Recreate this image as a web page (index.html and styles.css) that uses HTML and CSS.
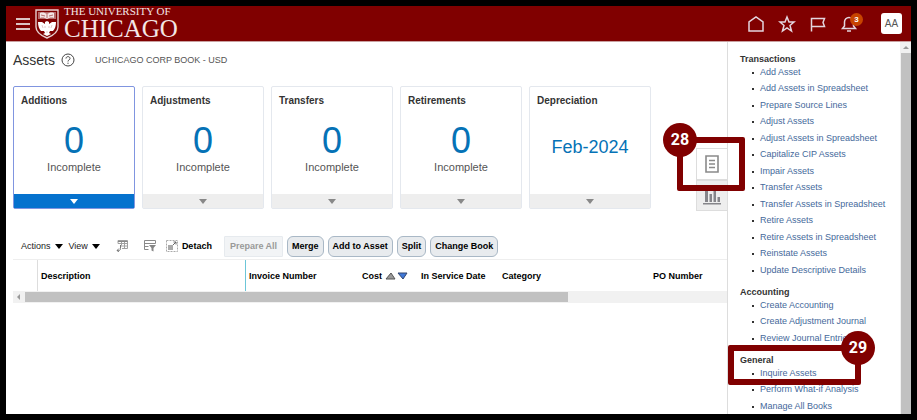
FILE: index.html
```html
<!DOCTYPE html>
<html lang="en">
<head>
    <meta charset="UTF-8">
    <meta name="viewport" content="width=device-width, initial-scale=1.0">
    <title>Assets</title>
    <link rel="stylesheet" href="styles.css">
</head>
<body>
    <header class="topbar">
        <button class="icon-button menu" type="button" aria-label="Menu">
            <svg width="14" height="12" viewBox="0 0 14 12" stroke="#dcc3c3" stroke-width="2"><path d="M0 1h14M0 6h14M0 11h14"/></svg>
        </button>
        <a class="logo" href="#">
            <svg width="24" height="30" viewBox="0 0 24 30">
                <path d="M1 1h22v17c0 6-6 9-11 11C7 27 1 24 1 18z" fill="#800000" stroke="#e6cfcf" stroke-width="1.4"/>
                <path d="M3 3h18v7H3z" fill="#b56a6a"/>
                <path d="M5 4c3-1 5 0 7 1 2-1 4-2 7-1v5c-3-1-5 0-7 1-2-1-4-2-7-1z" fill="#f4e6e6"/>
                <path d="M12 5v4M6 6l4 1M18 6l-4 1" stroke="#a65050" stroke-width=".8"/>
                <path d="M3 13l4 0 3 2 0-2 2-1 2 1 0 2 3-2 4 0c0 4-1 7-3 9l-3 0-1 2 2 1-4 2-4-2 2-1-1-2-3 0c-2-2-3-5-3-9z" fill="#fff"/>
                <path d="M7 16l1 3M10 17v2M14 17v2M17 16l-1 3M12 22v2" stroke="#d3a5a5" stroke-width=".6"/>
            </svg>
            <span class="logo-text">
                <span class="logo-small">THE UNIVERSITY OF</span>
                <span class="logo-big">CHICAGO</span>
            </span>
        </a>
        <nav class="top-icons">
            <button class="icon-button" type="button" aria-label="Home">
                <svg width="18" height="18" viewBox="0 0 18 18" fill="none" stroke="#e3d5de" stroke-width="1.5"><path d="M2 16V7l7-5 7 5v9z"/></svg>
            </button>
            <button class="icon-button" type="button" aria-label="Favorites">
                <svg width="18" height="18" viewBox="0 0 18 18" fill="none" stroke="#e3d5de" stroke-width="1.5"><path d="M9 2l2 5h5l-4 3.500 1.500 5.500L9 12.800 4.500 16 6 10.500 2 7h5z"/></svg>
            </button>
            <button class="icon-button" type="button" aria-label="Watchlist">
                <svg width="18" height="18" viewBox="0 0 18 18" fill="none" stroke="#e3d5de" stroke-width="1.5"><path d="M2.500 16.500V3.500h13L14 7.500l1.500 4h-13"/></svg>
            </button>
            <button class="icon-button bell" type="button" aria-label="Notifications">
                <svg width="18" height="18" viewBox="0 0 18 18" fill="none" stroke="#e3d5de" stroke-width="1.5"><path d="M2.500 13.500h13L13.500 11V7a4.500 4.500 0 0 0-9 0v4z"/><path d="M7 16h4"/></svg>
                <span class="badge">3</span>
            </button>
            <button class="avatar" type="button">AA</button>
        </nav>
    </header>

    <div class="page">
        <main class="content">
            <div class="title-row">
                <h1>Assets</h1>
                <button class="icon-button" type="button" aria-label="Help">
                    <svg width="14" height="14" viewBox="0 0 14 14" fill="none" stroke="#444"><circle cx="7" cy="7" r="6"/><path d="M5 5.500c0-2.500 4-2.500 4 0C9 7 7 6.800 7 8.500M7 9.700v1.200"/></svg>
                </button>
                <span class="book">UCHICAGO CORP BOOK - USD</span>
            </div>

            <div class="overview">
                <section class="card selected">
                    <h2>Additions</h2>
                    <div class="card-body"><a class="count" href="#">0</a><span>Incomplete</span></div>
                    <button class="card-foot" type="button" aria-label="Show additions"></button>
                </section>
                <section class="card">
                    <h2>Adjustments</h2>
                    <div class="card-body"><a class="count" href="#">0</a><span>Incomplete</span></div>
                    <button class="card-foot" type="button" aria-label="Show adjustments"></button>
                </section>
                <section class="card">
                    <h2>Transfers</h2>
                    <div class="card-body"><a class="count" href="#">0</a><span>Incomplete</span></div>
                    <button class="card-foot" type="button" aria-label="Show transfers"></button>
                </section>
                <section class="card">
                    <h2>Retirements</h2>
                    <div class="card-body"><a class="count" href="#">0</a><span>Incomplete</span></div>
                    <button class="card-foot" type="button" aria-label="Show retirements"></button>
                </section>
                <section class="card">
                    <h2>Depreciation</h2>
                    <div class="card-body"><a class="period" href="#">Feb-2024</a></div>
                    <button class="card-foot" type="button" aria-label="Show depreciation"></button>
                </section>

                <div class="side-tabs">
                    <button class="side-tab active" type="button" aria-label="Tasks">
                        <svg width="14" height="18" viewBox="0 0 14 18" fill="none" stroke="#8a8a8a" stroke-width="1.600"><path d="M1 1h12v16H1z"/><path d="M4 5.500h6M4 9h6M4 12.500h6"/></svg>
                    </button>
                    <button class="side-tab" type="button" aria-label="Reports">
                        <svg width="18" height="18" viewBox="0 0 18 18" fill="#85858a"><path d="M0 16h18v1.500H0zM2 2h3v13H2zM6.500 7h2.500v8H6.500zM10.500 4H13v11h-2.500zM14.500 10H17v5h-2.500z"/></svg>
                    </button>
                    <div class="callout callout-tasks"><span>28</span></div>
                </div>
            </div>

            <div class="toolbar">
                <button class="menu-button" type="button">Actions</button>
                <button class="menu-button" type="button">View</button>
                <button class="icon-button export" type="button" aria-label="Export">
                    <svg width="12" height="12" viewBox="0 0 12 12" fill="none" stroke="#a0a0a0"><path d="M2 .500h9.500v8H6M2 3.500h9.500M5 6h6.500M5.500.500v5M8.500.500v8M2 .500v3"/><path d="M2 1.500h9.500" stroke="#888"/><path d="M4.500 5v3.500c0 2-1 2-3.500 2M3 8.500l-2 2 2 1.500" stroke="#777"/></svg>
                </button>
                <button class="icon-button query" type="button" aria-label="Query by example">
                    <svg width="12" height="12" viewBox="0 0 12 12" fill="none" stroke="#8a8a8a"><path d="M11.500 3.500V.500H.500v9h4M.500 3.500h11M.500 6.500h4"/><path d="M5 5h7L9.500 8v3.500l-2-1V8z" fill="#858585" stroke="none"/></svg>
                </button>
                <button class="detach" type="button">
                    <svg width="12" height="12" viewBox="0 0 12 12" fill="none" stroke="#aaa"><path d="M.500.500h11v11H.500z" stroke-dasharray="2 1"/><path d="M2 5h5v5H2z" fill="#aaa" stroke="none"/><path d="M7 5l3-3M7.500 2H10v2.500" stroke="#666"/></svg>
                    Detach
                </button>
                <div class="actions">
                    <button class="action" type="button" disabled>Prepare All</button>
                    <button class="action" type="button">Merge</button>
                    <button class="action" type="button">Add to Asset</button>
                    <button class="action" type="button">Split</button>
                    <button class="action" type="button">Change Book</button>
                </div>
            </div>

            <table class="grid">
                <thead>
                    <tr>
                        <th class="col-select"></th>
                        <th class="col-description">Description</th>
                        <th class="col-invoice">Invoice Number</th>
                        <th class="col-cost">Cost
                            <svg width="23" height="8" viewBox="0 0 23 8"><path d="M1 7l5-6 4 6z" fill="#999" stroke="#555"/><path d="M13 1h9l-4 6z" fill="#3f78d8" stroke="#34466e"/></svg>
                        </th>
                        <th class="col-date">In Service Date</th>
                        <th class="col-category">Category</th>
                        <th>PO Number</th>
                    </tr>
                </thead>
            </table>
            <div class="hscroll"><span class="arrow-left"></span><span class="hthumb"></span></div>
        </main>

        <aside class="tasks">
            <div class="task-list">
                <section>
                    <h3>Transactions</h3>
                    <ul>
                        <li><a href="#">Add Asset</a></li>
                        <li><a href="#">Add Assets in Spreadsheet</a></li>
                        <li><a href="#">Prepare Source Lines</a></li>
                        <li><a href="#">Adjust Assets</a></li>
                        <li><a href="#">Adjust Assets in Spreadsheet</a></li>
                        <li><a href="#">Capitalize CIP Assets</a></li>
                        <li><a href="#">Impair Assets</a></li>
                        <li><a href="#">Transfer Assets</a></li>
                        <li><a href="#">Transfer Assets in Spreadsheet</a></li>
                        <li><a href="#">Retire Assets</a></li>
                        <li><a href="#">Retire Assets in Spreadsheet</a></li>
                        <li><a href="#">Reinstate Assets</a></li>
                        <li><a href="#">Update Descriptive Details</a></li>
                    </ul>
                </section>
                <section>
                    <h3>Accounting</h3>
                    <ul>
                        <li><a href="#">Create Accounting</a></li>
                        <li><a href="#">Create Adjustment Journal</a></li>
                        <li><a href="#">Review Journal Entries</a></li>
                    </ul>
                </section>
                <section class="general">
                    <h3>General</h3>
                    <ul>
                        <li><a href="#">Inquire Assets</a></li>
                        <li><a href="#">Perform What-if Analysis</a></li>
                        <li><a href="#">Manage All Books</a></li>
                    </ul>
                    <div class="callout callout-inquire"><span>29</span></div>
                </section>
            </div>
            <div class="vscroll"><span class="arrow-up"></span><span class="vthumb"></span></div>
        </aside>
    </div>
</body>
</html>
```
FILE: styles.css
```css
* {
    box-sizing: border-box;
}

body {
    display: flex;
    flex-direction: column;
    height: 100vh;
    margin: 0;
    border: 6px solid #000;
    background-color: white;
    color: #333;
    font-family: "Liberation Sans", Arial, sans-serif;
    font-size: 9px;
    overflow: hidden;
}

h1, h2, h3, ul {
    margin: 0;
    padding: 0;
}

a {
    text-decoration: none;
}

button {
    padding: 0;
    border: 0;
    background: none;
    color: inherit;
    font: inherit;
}

svg {
    display: block;
}

/* top bar */
.topbar {
    display: flex;
    flex: none;
    align-items: center;
    height: 36px;
    padding: 0 9px 0 10px;
    background-color: #800000;
    border-bottom: 1px solid #c9a0a0;
}

.logo {
    display: flex;
    align-items: center;
    gap: 5px;
    margin-left: 5px;
    color: #f3e6e6;
    font-family: "Liberation Serif", "Times New Roman", serif;
}

.logo-text {
    display: flex;
    flex-direction: column;
}

.logo-small {
    font-size: 11px;
    line-height: 11px;
}

.logo-big {
    font-size: 25px;
    line-height: 24px;
}

.top-icons {
    display: flex;
    align-items: center;
    gap: 13px;
    margin-left: auto;
}

.bell {
    position: relative;
}

.badge {
    position: absolute;
    top: -2px;
    right: -5px;
    width: 13px;
    height: 13px;
    border-radius: 50%;
    background-color: #c74400;
    color: white;
    font-size: 8px;
    font-weight: bold;
    line-height: 13px;
    text-align: center;
}

.avatar {
    width: 21px;
    height: 21px;
    margin-left: 10px;
    border-radius: 3px;
    background-color: white;
    color: #555;
    font-size: 10px;
}

.page {
    display: flex;
    flex: 1;
    min-height: 0;
}

.content {
    flex: 1;
    min-width: 0;
    padding-left: 7px;
}

.title-row {
    display: flex;
    align-items: center;
    height: 36px;
    gap: 6px;
}

h1 {
    color: #333;
    font-size: 14px;
    font-weight: normal;
}

.book {
    margin-left: 14px;
    color: #555;
}

/* overview cards */
.overview {
    display: flex;
    gap: 7px;
    margin-top: 8px;
}

.card {
    display: flex;
    flex-direction: column;
    width: 122px;
    height: 123px;
    border: 1px solid #e4e8ee;
    border-radius: 2px;
}

.card h2 {
    padding: 8px 7px 0;
    font-size: 10px;
    line-height: 12px;
}

.card-body {
    display: flex;
    flex: 1;
    flex-direction: column;
    align-items: center;
    justify-content: center;
    padding-bottom: 8px;
    color: #555;
    font-size: 11px;
    line-height: 12px;
}

.count {
    color: #0572b6;
    font-size: 36px;
    line-height: 40px;
}

.period {
    color: #0572b6;
    font-size: 18px;
    line-height: 20px;
}

.card-foot {
    display: flex;
    align-items: center;
    justify-content: center;
    height: 14px;
    background-color: #eee;
}

.card-foot::after {
    content: "";
    border: 4px solid transparent;
    border-top: 5px solid #888;
    border-bottom: 0;
}

.card.selected {
    border-color: #8095e0;
}

.selected .card-foot {
    background-color: #0572ce;
}

.selected .card-foot::after {
    border-top-color: white;
}

.side-tabs {
    position: relative;
    width: 31px;
    margin-top: 62px;
    margin-left: auto;
}

.side-tab {
    display: flex;
    align-items: center;
    justify-content: center;
    width: 31px;
    height: 31px;
    border: 1px solid #ddd;
    border-right: 0;
    background-color: #eee;
}

.side-tab.active {
    height: 32px;
    background-color: white;
}

/* numbered callouts */
.callout {
    position: absolute;
    z-index: 2;
    border: 6px solid #800000;
    border-radius: 2px;
}

.callout span {
    position: absolute;
    width: 34px;
    height: 34px;
    border-radius: 50%;
    background-color: #800000;
    color: white;
    font-family: Roboto, sans-serif;
    font-size: 16px;
    font-weight: bold;
    line-height: 34px;
    text-align: center;
}

.callout-tasks {
    top: -11px;
    left: -19px;
    width: 68px;
    height: 54px;
}

.callout-tasks span {
    top: -20px;
    left: -20px;
}

.callout-inquire {
    top: -9px;
    left: -12px;
    width: 133px;
    height: 40px;
}

.callout-inquire span {
    top: -20px;
    right: -20px;
}

/* table toolbar */
.toolbar {
    display: flex;
    align-items: center;
    height: 24px;
    margin-top: 24px;
    padding-bottom: 2px;
    padding-left: 8px;
    color: #222;
}

.menu-button {
    display: flex;
    align-items: center;
    gap: 4px;
    margin-right: 6px;
}

.menu-button::after {
    content: "";
    border: 4px solid transparent;
    border-top: 5px solid #000;
    border-bottom: 0;
}

.export {
    margin-left: 10px;
}

.query {
    margin-left: 16px;
}

.detach {
    display: flex;
    align-items: center;
    gap: 4px;
    margin-left: 10px;
    color: #000;
    font-weight: bold;
}

.actions {
    display: flex;
    gap: 4px;
    margin-left: 12px;
}

.action {
    height: 21px;
    padding: 0 4px;
    border: 1px solid #a9b8c6;
    border-radius: 6px;
    background-color: #e8ebee;
    color: #000;
    font-weight: bold;
}

.action:disabled {
    padding: 0 5px;
    border-color: #e6eaee;
    border-radius: 1px;
    background-color: #f2f4f6;
    color: #999;
}

.grid {
    width: 100%;
    border-top: 1px solid #eee;
    border-spacing: 0;
    table-layout: fixed;
    color: #000;
}

.grid th {
    height: 31px;
    padding: 0 0 0 3px;
    text-align: left;
    white-space: nowrap;
}

.grid svg {
    display: inline-block;
    vertical-align: -1px;
}

.col-select {
    width: 25px;
    border-right: 1px solid #ddd;
}

.grid .col-description {
    width: 208px;
    border-right: 1px solid #6cc6d8;
}

.col-invoice {
    width: 113px;
}

.col-cost {
    width: 59px;
}

.col-date {
    width: 81px;
}

.col-category {
    width: 151px;
}

.hscroll {
    display: flex;
    align-items: center;
    height: 12px;
    background-color: #f1f1f1;
}

.arrow-left {
    margin: 0 5px 0 4px;
    border: 3px solid transparent;
    border-right-color: #999;
    border-left: 0;
}

.hthumb {
    width: 76%;
    height: 10px;
    background-color: #c1c1c1;
}

/* task panel */
.tasks {
    display: flex;
    width: 184px;
    border-left: 1px solid #ddd;
}

.task-list {
    flex: 1;
    padding: 11px 0 0 12px;
}

.task-list section {
    margin-bottom: 7px;
}

.task-list h3 {
    font-size: 9px;
    line-height: 12px;
}

.task-list ul {
    padding-left: 12px;
    list-style: none;
}

.task-list li {
    display: flex;
    gap: 6px;
    height: 16px;
    line-height: 14px;
    white-space: nowrap;
}

.task-list li::before {
    content: "";
    width: 2px;
    height: 2px;
    margin-top: 7px;
    background-color: #333;
}

.task-list li:nth-child(even) {
    height: 17px;
}

.task-list a {
    color: #45699b;
}

.general {
    position: relative;
}

.vscroll {
    display: flex;
    flex-direction: column;
    align-items: center;
    width: 11px;
    background-color: #f1f1f1;
}

.arrow-up {
    margin: 4px 0;
    border: 3px solid transparent;
    border-top: 0;
    border-bottom-color: #999;
}

.vthumb {
    flex: 1;
    width: 10px;
    background-color: #c1c1c1;
}
```
